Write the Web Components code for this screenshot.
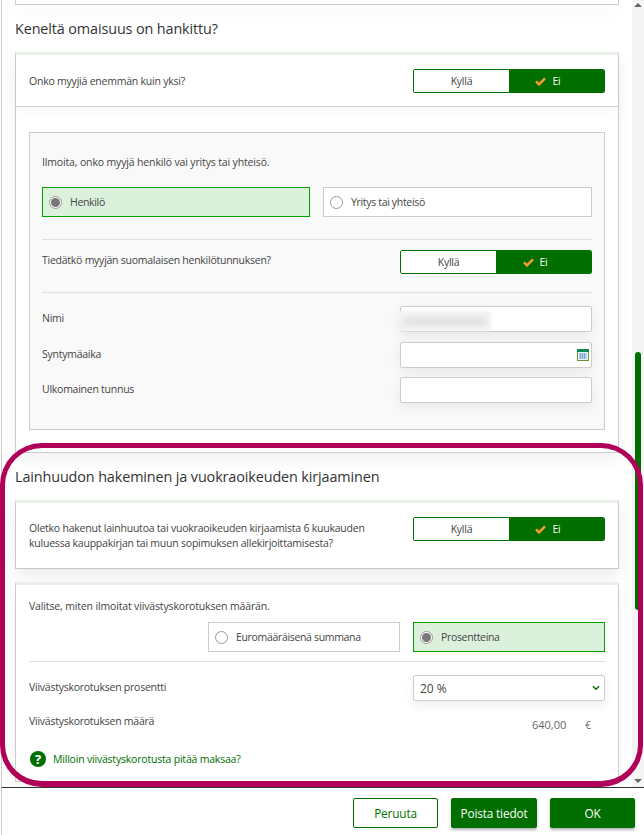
<!DOCTYPE html>
<html lang="fi">
<head>
<meta charset="utf-8">
<title>Keneltä omaisuus on hankittu?</title>
<style>
  html, body { margin: 0; padding: 0; background: #fff; }
  body { font-family: "Open Sans", "Liberation Sans", sans-serif; font-size: 10.5px; letter-spacing: -.2px; color: #444; }
</style>
</head>
<body>
<tax-app>
  <tax-stub></tax-stub>
  <tax-heading>Keneltä omaisuus on hankittu?</tax-heading>
  <tax-card>
    <tax-question style="--h:51px">
      Onko myyjiä enemmän kuin yksi?
      <tax-toggle slot="end"></tax-toggle>
    </tax-question>
    <tax-panel>
      <tax-line style="--h:54px; --top:20px">Ilmoita, onko myyjä henkilö vai yritys tai yhteisö.</tax-line>
      <tax-choices style="--cols:268px 269px">
        <tax-choice checked>Henkilö</tax-choice>
        <tax-choice>Yritys tai yhteisö</tax-choice>
      </tax-choices>
      <tax-rule style="--mt:22px"></tax-rule>
      <tax-field style="--h:52px; --mt:0px; --top:10px; --align:flex-start">
        Tiedätkö myyjän suomalaisen henkilötunnuksen?
        <tax-toggle slot="end"></tax-toggle>
      </tax-field>
      <tax-rule></tax-rule>
      <tax-field style="--h:26px; --mt:13px">Nimi<tax-input slot="end" blurred></tax-input></tax-field>
      <tax-field style="--h:26px; --mt:10px">Syntymäaika<tax-input slot="end" calendar></tax-input></tax-field>
      <tax-field style="--h:26px; --mt:9px; --mb:26px">Ulkomainen tunnus<tax-input slot="end"></tax-input></tax-field>
    </tax-panel>
  </tax-card>

  <tax-heading>Lainhuudon hakeminen ja vuokraoikeuden kirjaaminen</tax-heading>
  <tax-card>
    <tax-question style="--h:65px">
      Oletko hakenut lainhuutoa tai vuokraoikeuden kirjaamista 6 kuukauden<br>kuluessa kauppakirjan tai muun sopimuksen allekirjoittamisesta?
      <tax-toggle slot="end"></tax-toggle>
    </tax-question>
  </tax-card>
  <tax-card style="--mt:13px">
    <tax-form>
      <tax-line style="--h:37px; --top:12px">Valitse, miten ilmoitat viivästyskorotuksen määrän.</tax-line>
      <tax-choices style="--cols:192px 192px; --justify:end">
        <tax-choice>Euromääräisenä summana</tax-choice>
        <tax-choice checked>Prosentteina</tax-choice>
      </tax-choices>
      <tax-rule style="--mt:9px"></tax-rule>
      <tax-field style="--h:26px; --mt:13px">Viivästyskorotuksen prosentti<tax-select slot="end">20 %</tax-select></tax-field>
      <tax-field style="--h:18px; --mt:12px; --end-top:6px">Viivästyskorotuksen määrä<tax-amount slot="end">640,00</tax-amount></tax-field>
      <tax-help>Milloin viivästyskorotusta pitää maksaa?</tax-help>
    </tax-form>
  </tax-card>

  <tax-button slot="footer">Peruuta</tax-button>
  <tax-button slot="footer" primary wide>Poista tiedot</tax-button>
  <tax-button slot="footer" primary>OK</tax-button>
</tax-app>

<script>
  const CHECK = `<svg width="11" height="9" viewBox="0 0 11 9"><path d="M1 4.300 4 7.300 10 1.300" fill="none" stroke="#f59a2f" stroke-width="2.600"/></svg>`;

  class BaseElement extends HTMLElement {
    constructor() {
      super();
      this.shadowDOM = this.attachShadow({ mode: "open" });
    }
    connectedCallback() {
      this.render();
    }
  }

  class TaxApp extends BaseElement {
    render() {
      this.shadowDOM.innerHTML = `
        <style>
          :host { display: flex; flex-direction: column; position: relative; width: 644px; height: 835px; overflow: hidden; background: #fff; }
          .top { display: flex; height: 787px; margin-left: 1px; border-left: 1px solid #ccc; }
          .scroll { flex: 1; min-width: 0; overflow: hidden; padding: 0 13px; }
          .bar { width: 12px; background: #f5f5f5; display: flex; flex-direction: column; align-items: center; }
          .up, .down { width: 0; height: 0; border: 4px solid transparent; }
          .up { border-top: 0; border-bottom-color: #666; margin-top: 3px; }
          .down { border-bottom: 0; border-top-color: #666; }
          .thumb { width: 6px; height: 258px; margin: 345px 0 169px; border-radius: 3px; background: #006f00; }
          .foot { display: flex; justify-content: flex-end; gap: 13px; height: 37px; padding: 10px 9px 0 0; margin-left: 1px; border-left: 1px solid #ccc; border-top: 1px solid #333; }
          .mark { position: absolute; left: 0; top: 443px; width: 643px; height: 344px; box-sizing: border-box; border: 5px solid #b10058; border-bottom-width: 6px; border-radius: 42px; pointer-events: none; }
        </style>
        <div class="top">
          <div class="scroll"><slot></slot></div>
          <div class="bar"><div class="up"></div><div class="thumb"></div><div class="down"></div></div>
        </div>
        <div class="foot"><slot name="footer"></slot></div>
        <div class="mark"></div>
      `;
    }
  }

  class TaxStub extends BaseElement {
    render() {
      this.shadowDOM.innerHTML = `
        <style>
          :host { display: block; height: 4px; border: 1px solid #ccc; border-top: 0; box-shadow: 0 8px 16px rgba(0,0,0,.05); }
        </style>
      `;
    }
  }

  class TaxHeading extends BaseElement {
    render() {
      this.shadowDOM.innerHTML = `
        <style>
          :host { display: flex; align-items: center; height: 47px; font-size: 14.4px; font-weight: 500; letter-spacing: -.12px; color: #333; }
        </style>
        <slot></slot>
      `;
    }
  }

  class TaxCard extends BaseElement {
    render() {
      this.shadowDOM.innerHTML = `
        <style>
          :host { display: block; margin-top: var(--mt, 0); background: #fff; border: 1px solid #ccc; border-top: 3px solid #e8f0e8; box-shadow: 0 8px 16px rgba(0,0,0,.05); }
        </style>
        <slot></slot>
      `;
    }
  }

  class TaxQuestion extends BaseElement {
    render() {
      this.shadowDOM.innerHTML = `
        <style>
          :host { display: flex; justify-content: space-between; height: var(--h); padding: 0 13px; line-height: 15px; letter-spacing: -.22px; box-shadow: 0 6px 14px rgba(0,0,0,.035); }
          .text { align-self: center; margin-top: 1px; }
          .end { padding-top: 14px; }
        </style>
        <div class="text"><slot></slot></div>
        <div class="end"><slot name="end"></slot></div>
      `;
    }
  }

  class TaxPanel extends BaseElement {
    render() {
      this.shadowDOM.innerHTML = `
        <style>
          :host { display: block; border-top: 1px solid #ccc; padding: 25px 13px 22px; }
          .box { background: #f9f9f9; border: 1px solid #ccc; padding: 0 12px; }
        </style>
        <div class="box"><slot></slot></div>
      `;
    }
  }

  class TaxForm extends BaseElement {
    render() {
      this.shadowDOM.innerHTML = `
        <style>
          :host { display: block; padding: 0 13px; height: 196px; }
        </style>
        <slot></slot>
      `;
    }
  }

  class TaxLine extends BaseElement {
    render() {
      this.shadowDOM.innerHTML = `
        <style>
          :host { display: block; box-sizing: border-box; height: var(--h); padding-top: var(--top); line-height: 18px; letter-spacing: -.15px; }
        </style>
        <slot></slot>
      `;
    }
  }

  class TaxChoices extends BaseElement {
    render() {
      this.shadowDOM.innerHTML = `
        <style>
          :host { display: grid; grid-template-columns: var(--cols); justify-content: var(--justify, start); column-gap: 13px; }
        </style>
        <slot></slot>
      `;
    }
  }

  class TaxChoice extends BaseElement {
    render() {
      const checked = this.hasAttribute("checked");
      this.shadowDOM.innerHTML = `
        <style>
          :host { display: flex; align-items: center; gap: 8px; box-sizing: border-box; height: 30px; padding-left: 6px; letter-spacing: -.33px; background: ${checked ? "#dcf1dc" : "#fff"}; border: 1px solid ${checked ? "#00a000" : "#ccc"}; }
          .dot { box-sizing: border-box; width: 13px; height: 13px; border-radius: 50%; border: 1px solid #999; background: #fff; display: flex; align-items: center; justify-content: center; flex: none; }
          .dot i { width: 9px; height: 9px; border-radius: 50%; background: #777; display: ${checked ? "block" : "none"}; }
        </style>
        <span class="dot"><i></i></span><slot></slot>
      `;
    }
  }

  class TaxRule extends BaseElement {
    render() {
      this.shadowDOM.innerHTML = `
        <style>
          :host { display: block; height: 1px; margin-top: var(--mt, 0); background: #e0e0e0; }
        </style>
      `;
    }
  }

  class TaxField extends BaseElement {
    render() {
      this.shadowDOM.innerHTML = `
        <style>
          :host { display: flex; justify-content: space-between; align-items: var(--align, center); box-sizing: border-box; height: var(--h); margin-top: var(--mt, 0); margin-bottom: var(--mb, 0); padding-top: var(--top, 0); letter-spacing: -.25px; }
          .text { line-height: 24px; margin-top: -2px; }
          .end { width: 192px; padding-top: var(--end-top, 0); }
        </style>
        <div class="text"><slot></slot></div>
        <div class="end"><slot name="end"></slot></div>
      `;
    }
  }

  class TaxToggle extends BaseElement {
    render() {
      this.shadowDOM.innerHTML = `
        <style>
          :host { display: flex; box-sizing: border-box; width: 192px; height: 24px; border: 1px solid #006f00; border-radius: 2px; overflow: hidden; }
          span { flex: 1; display: flex; align-items: center; justify-content: center; background: #fff; color: #444; }
          span.on { background: #006f00; color: #fff; }
          svg { margin-left: -17px; margin-right: 6px; }
        </style>
        <span>Kyllä</span>
        <span class="on">${CHECK}Ei</span>
      `;
    }
  }

  class TaxInput extends BaseElement {
    render() {
      const blurred = this.hasAttribute("blurred");
      const calendar = this.hasAttribute("calendar");
      this.shadowDOM.innerHTML = `
        <style>
          :host { display: flex; align-items: center; justify-content: flex-end; position: relative; box-sizing: border-box; width: 192px; height: 26px; background: #fff; border: 1px solid #ccc; border-radius: 2px; box-shadow: 0 4px 12px rgba(0,0,0,.07); padding-right: 2px; }
          .blur { position: absolute; left: -2px; top: 4px; width: 92px; height: 20px; background: #f5f5f5; filter: blur(1px); overflow: hidden; }
          .blur i { position: absolute; left: 4px; top: 7px; width: 84px; height: 7px; background: #dddddd; filter: blur(3px); }
          svg { display: block; }
        </style>
        ${blurred ? `<div class="blur"><i></i></div>` : ""}
        ${calendar ? `<svg width="12" height="12" viewBox="0 0 12 12">
          <rect x=".5" y=".5" width="11" height="11" fill="#eef6fb" stroke="#6d8f3a"/>
          <rect x="0" y="0" width="12" height="3" fill="#0a8a4a"/>
          <path d="M2 5h8M2 7h8M2 9h8M3.500 4v6M5.500 4v6M7.500 4v6" stroke="#5aa0c8" stroke-width=".8" fill="none"/>
        </svg>` : ""}
      `;
    }
  }

  class TaxSelect extends BaseElement {
    render() {
      this.shadowDOM.innerHTML = `
        <style>
          :host { display: flex; align-items: center; justify-content: space-between; box-sizing: border-box; width: 192px; height: 26px; padding: 1px 4px 0 6px; background: #fff; border: 1px solid #ccc; border-radius: 2px; box-shadow: 0 4px 12px rgba(0,0,0,.07); font-size: 12px; letter-spacing: 0; color: #444; }
          svg { margin-top: -2px; }
        </style>
        <slot></slot>
        <svg width="8" height="6" viewBox="0 0 8 6"><path d="M1 1.200 4 4.200 7 1.200" fill="none" stroke="#006f00" stroke-width="1.500"/></svg>
      `;
    }
  }

  class TaxAmount extends BaseElement {
    render() {
      this.shadowDOM.innerHTML = `
        <style>
          :host { display: flex; justify-content: flex-end; line-height: 18px; color: #666; font-size: 11px; letter-spacing: 0; }
          .num { margin-right: 19px; }
          .cur { margin-right: 14px; font-size: 10px; }
        </style>
        <span class="num"><slot></slot></span><span class="cur">€</span>
      `;
    }
  }

  class TaxHelp extends BaseElement {
    render() {
      this.shadowDOM.innerHTML = `
        <style>
          :host { display: flex; align-items: center; gap: 7px; margin-top: 20px; padding-left: 1px; color: #006f00; height: 16px; }
          .q { width: 16px; height: 16px; border-radius: 50%; background: #006f00; color: #fff; font-size: 13px; font-weight: 700; line-height: 16px; letter-spacing: 0; text-align: center; flex: none; }
        </style>
        <span class="q">?</span><slot></slot>
      `;
    }
  }

  class TaxButton extends BaseElement {
    render() {
      const primary = this.hasAttribute("primary");
      const wide = this.hasAttribute("wide");
      this.shadowDOM.innerHTML = `
        <style>
          :host { display: flex; align-items: center; justify-content: center; box-sizing: border-box; width: ${wide ? 86 : 85}px; height: 30px; border: 1px solid #006f00; border-radius: 2px; font-size: 11.8px; letter-spacing: -.15px; ${primary ? "background: #006f00; color: #fff; font-weight: 500; box-shadow: 0 2px 3px rgba(0,0,0,.3);" : "background: #fff; color: #006f00;"} }
        </style>
        <slot></slot>
      `;
    }
  }

  customElements.define("tax-app", TaxApp);
  customElements.define("tax-stub", TaxStub);
  customElements.define("tax-heading", TaxHeading);
  customElements.define("tax-card", TaxCard);
  customElements.define("tax-question", TaxQuestion);
  customElements.define("tax-panel", TaxPanel);
  customElements.define("tax-form", TaxForm);
  customElements.define("tax-line", TaxLine);
  customElements.define("tax-choices", TaxChoices);
  customElements.define("tax-choice", TaxChoice);
  customElements.define("tax-rule", TaxRule);
  customElements.define("tax-field", TaxField);
  customElements.define("tax-toggle", TaxToggle);
  customElements.define("tax-input", TaxInput);
  customElements.define("tax-select", TaxSelect);
  customElements.define("tax-amount", TaxAmount);
  customElements.define("tax-help", TaxHelp);
  customElements.define("tax-button", TaxButton);
</script>
</body>
</html>
